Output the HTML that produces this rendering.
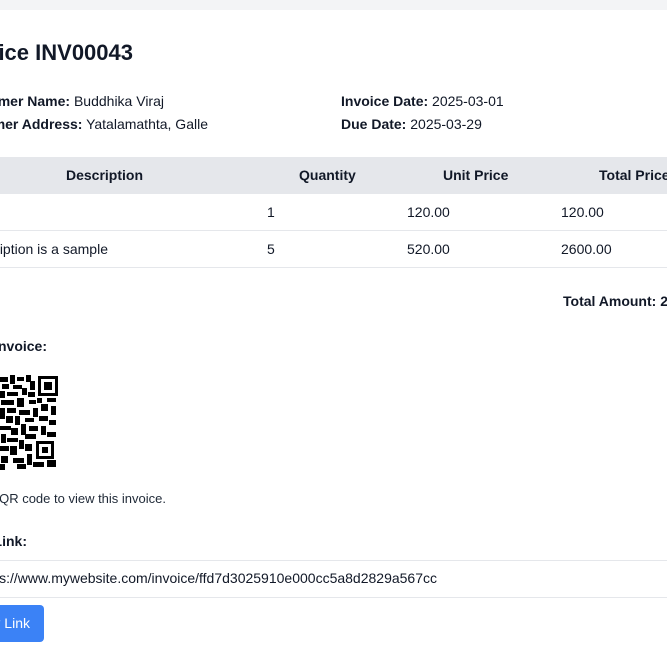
<!DOCTYPE html>
<html><head><meta charset="utf-8"><style>
*{margin:0;padding:0;box-sizing:border-box}
html,body{width:667px;height:667px;overflow:hidden}
body{background:#fff;font-family:"Segoe UI","Liberation Sans",sans-serif;color:#111827;font-size:14px;position:relative}
#w{position:absolute;left:0;top:0;width:667px;height:667px;overflow:hidden}
.a{position:absolute;white-space:nowrap}
.r{position:absolute;white-space:nowrap;text-align:right}
b{font-weight:bold}
</style></head><body><div id="w">
<div class="a" style="left:0;top:0;width:667px;height:10px;background:#f3f4f6"></div>
<div class="r" style="right:534px;top:40px;font-size:22px;font-weight:bold">Invoice INV00043</div>
<div class="r" style="right:503px;top:93px"><b>Customer Name:</b> Buddhika Viraj</div>
<div class="r" style="right:459px;top:116px"><b>Customer Address:</b> Yatalamathta, Galle</div>
<div class="a" style="left:341px;top:93px"><b>Invoice Date:</b> 2025-03-01</div>
<div class="a" style="left:341px;top:116px"><b>Due Date:</b> 2025-03-29</div>
<div class="a" style="left:0;top:157px;width:667px;height:37px;background:#e5e7eb"></div>
<div class="a" style="left:66px;top:167px;font-weight:bold">Description</div>
<div class="a" style="left:299px;top:167px;font-weight:bold">Quantity</div>
<div class="a" style="left:443px;top:167px;font-weight:bold">Unit Price</div>
<div class="a" style="left:599px;top:167px;font-weight:bold">Total Price</div>
<div class="a" style="left:0;top:230px;width:667px;height:1px;background:#e5e7eb"></div>
<div class="a" style="left:0;top:267px;width:667px;height:1px;background:#e5e7eb"></div>
<div class="a" style="left:267px;top:204px">1</div>
<div class="a" style="left:407px;top:204px">120.00</div>
<div class="a" style="left:561px;top:204px">120.00</div>
<div class="r" style="right:559px;top:241px">This description is a sample</div>
<div class="a" style="left:267px;top:241px">5</div>
<div class="a" style="left:407px;top:241px">520.00</div>
<div class="a" style="left:561px;top:241px">2600.00</div>
<div class="a" style="left:563px;top:293px;font-weight:bold">Total Amount: 2720.00</div>
<div class="r" style="right:620px;top:338px;font-weight:bold">Scan to view invoice:</div>
<svg class="a" style="left:0;top:375px" width="60" height="96" viewBox="0 0 60 96">
<rect x="38" y="1" width="20" height="20" fill="#000"/><rect x="41" y="4" width="14" height="14" fill="#fff"/><rect x="44" y="7" width="8" height="8" fill="#000"/>
<g fill="#000">
<rect x="0" y="2" width="8" height="5"/><rect x="10" y="0" width="5" height="9"/><rect x="17" y="2" width="7" height="4"/><rect x="26" y="0" width="5" height="7"/><rect x="30" y="6" width="5" height="9"/>
<rect x="2" y="9" width="7" height="5"/><rect x="13" y="10" width="9" height="4"/><rect x="22" y="13" width="5" height="7"/><rect x="0" y="16" width="5" height="7"/><rect x="7" y="17" width="11" height="4"/><rect x="28" y="17" width="7" height="5"/>
<rect x="37" y="23" width="5" height="5"/><rect x="47" y="23" width="9" height="4"/><rect x="1" y="25" width="13" height="5"/><rect x="17" y="23" width="7" height="9"/><rect x="29" y="25" width="7" height="4"/>
<rect x="41" y="29" width="7" height="7"/><rect x="51" y="31" width="5" height="9"/><rect x="0" y="33" width="5" height="11"/><rect x="7" y="33" width="9" height="5"/><rect x="19" y="35" width="11" height="5"/><rect x="33" y="33" width="5" height="9"/>
<rect x="6" y="41" width="7" height="7"/><rect x="15" y="41" width="5" height="9"/><rect x="25" y="43" width="9" height="4"/><rect x="39" y="41" width="9" height="5"/><rect x="49" y="45" width="7" height="5"/>
<rect x="0" y="51" width="11" height="4"/><rect x="11" y="53" width="7" height="7"/><rect x="21" y="49" width="5" height="11"/><rect x="29" y="51" width="9" height="5"/><rect x="41" y="51" width="5" height="9"/>
<rect x="1" y="59" width="5" height="9"/><rect x="7" y="63" width="11" height="4"/><rect x="25" y="59" width="11" height="5"/><rect x="47" y="57" width="9" height="5"/><rect x="19" y="65" width="5" height="9"/>
<rect x="36" y="66" width="18" height="18"/><rect x="0" y="71" width="9" height="5"/><rect x="10" y="71" width="7" height="9"/><rect x="25" y="69" width="7" height="7"/>
<rect x="1" y="81" width="7" height="7"/><rect x="13" y="83" width="11" height="5"/><rect x="27" y="79" width="5" height="11"/><rect x="0" y="89" width="5" height="6"/><rect x="17" y="89" width="9" height="5"/><rect x="33" y="87" width="11" height="5"/><rect x="47" y="85" width="9" height="7"/>
</g>
<rect x="39" y="69" width="12" height="12" fill="#fff"/><rect x="42" y="72" width="6" height="6" fill="#000"/>
</svg>
<div class="r" style="right:501px;top:491px;font-size:13px;color:#1f2937">Scan the QR code to view this invoice.</div>
<div class="r" style="right:640px;top:533px;font-weight:bold">Link:</div>
<div class="a" style="left:0;top:560px;width:667px;height:38px;border-top:1px solid #e5e7eb;border-bottom:1px solid #e5e7eb"></div>
<div class="r" style="right:230px;top:570px">https://www.mywebsite.com/invoice/ffd7d3025910e000cc5a8d2829a567cc</div>
<div class="a" style="left:-40px;top:605px;width:84px;height:37px;background:#3b82f6;border-radius:4px"></div>
<div class="r" style="right:637px;top:615px;color:#fff">Copy Link</div>
</div></body></html>
